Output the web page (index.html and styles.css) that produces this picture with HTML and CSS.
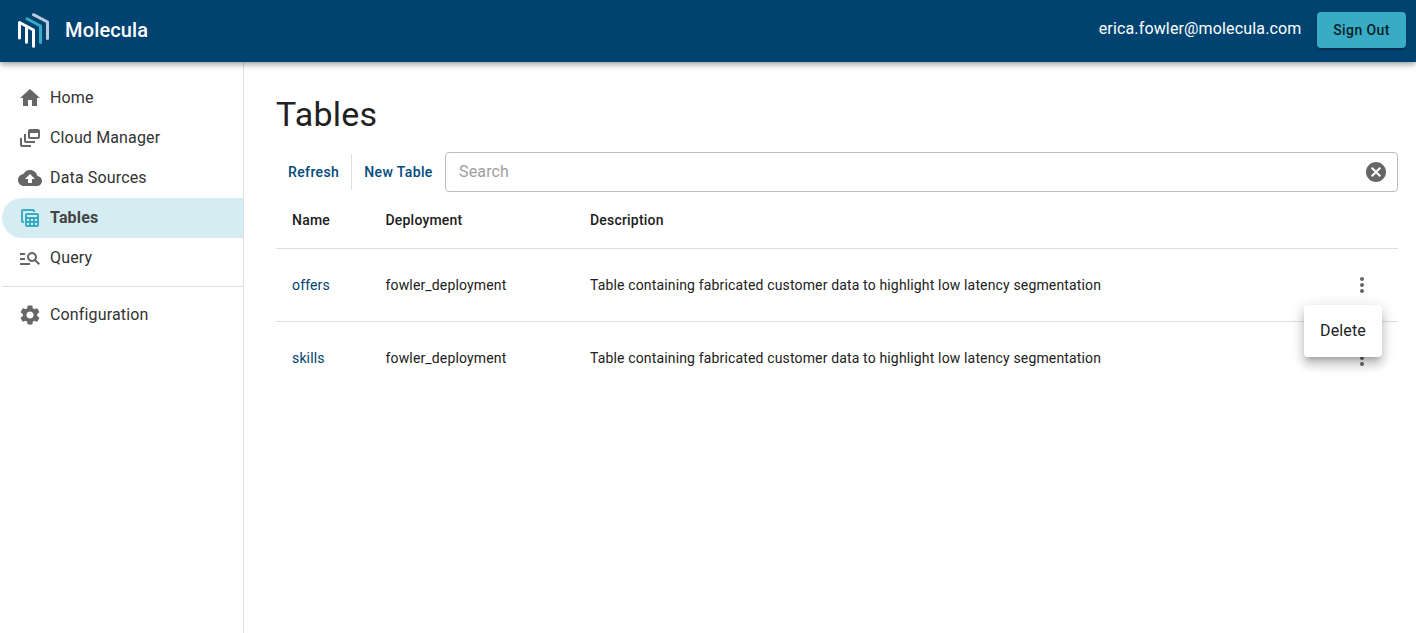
FILE: index.html
```html
<!DOCTYPE html>
<html lang="en">
<head>
<meta charset="utf-8">
<title>Molecula</title>
<link rel="stylesheet" href="styles.css">
</head>
<body>
<header class="topbar">
  <svg class="logo" viewBox="0 0 34 36" fill="none" stroke-width="3" stroke-linecap="round" stroke-linejoin="round">
    <path stroke="#b9cbd9" d="M17.500 2.700 31.500 10V26.500"/>
    <path stroke="#38acc5" d="M11 6.700 24.500 14V30.500"/>
    <path stroke="#fff" d="M3.500 26V10.500L17.500 18V34.300M10.500 14.500V30.300"/>
  </svg>
  <span class="brand">Molecula</span>
  <span class="email">erica.fowler@molecula.com</span>
  <button class="signout">Sign Out</button>
</header>
<div class="layout">
  <nav class="sidebar">
    <a class="item"><svg class="icon" viewBox="0 0 24 24"><path d="M10 20v-6h4v6h5v-8h3L12 3 2 12h3v8z"/></svg>Home</a>
    <a class="item"><svg class="icon" viewBox="0 0 24 24"><path d="M8 8H6v7c0 1.100.9 2 2 2h9v-2H8V8z"/><path d="M20 3h-8c-1.100 0-2 .9-2 2v6c0 1.100.9 2 2 2h8c1.100 0 2-.9 2-2V5c0-1.100-.9-2-2-2zm0 8h-8V7h8v4zM4 12H2v7c0 1.100.9 2 2 2h9v-2H4v-7z"/></svg>Cloud Manager</a>
    <a class="item"><svg class="icon" viewBox="0 0 24 24"><path d="M19.350 10.040C18.670 6.590 15.640 4 12 4 9.110 4 6.600 5.640 5.350 8.040 2.340 8.360 0 10.910 0 14c0 3.310 2.690 6 6 6h13c2.760 0 5-2.240 5-5 0-2.640-2.050-4.780-4.650-4.960zM14 13v4h-4v-4H7l5-5 5 5h-3z"/></svg>Data Sources</a>
    <a class="item active"><svg class="icon" viewBox="0 0 24 24"><path d="M19 7H9c-1.100 0-2 .9-2 2v10c0 1.100.9 2 2 2h10c1.100 0 2-.9 2-2V9c0-1.100-.9-2-2-2zm0 2v2H9V9h10zm-6 6v-2h2v2h-2zm2 2v2h-2v-2h2zm-4-2H9v-2h2v2zm6-2h2v2h-2v-2zm-8 4h2v2H9v-2zm8 2v-2h2v2h-2zM6 17H5c-1.100 0-2-.9-2-2V5c0-1.100.9-2 2-2h10c1.100 0 2 .9 2 2v1h-2V5H5v10h1v2z"/></svg>Tables</a>
    <a class="item"><svg class="icon" viewBox="0 0 24 24"><path d="M7 9H2V7h5v2zm0 3H2v2h5v-2zm13.590 7-3.830-3.830c-.8.52-1.740.83-2.760.83-2.760 0-5-2.240-5-5s2.240-5 5-5 5 2.240 5 5c0 1.020-.31 1.960-.83 2.750L22 17.590 20.590 19zM17 11c0-1.650-1.350-3-3-3s-3 1.350-3 3 1.350 3 3 3 3-1.350 3-3zM2 19h10v-2H2v2z"/></svg>Query</a>
    <hr class="rule">
    <a class="item"><svg class="icon" viewBox="0 0 24 24"><path d="M19.140 12.940c.04-.3.06-.61.06-.94 0-.32-.02-.64-.07-.94l2.030-1.580c.18-.14.23-.41.12-.61l-1.920-3.320c-.12-.22-.37-.29-.59-.22l-2.390.96c-.5-.38-1.030-.7-1.620-.94l-.36-2.540c-.04-.24-.24-.41-.48-.41h-3.840c-.24 0-.43.17-.47.41l-.36 2.540c-.59.24-1.130.57-1.620.94l-2.390-.96c-.22-.08-.47 0-.59.22L2.740 8.870c-.12.21-.08.47.12.61l2.030 1.580c-.05.3-.09.63-.09.94s.02.64.07.94l-2.030 1.580c-.18.14-.23.41-.12.61l1.920 3.320c.12.22.37.29.59.22l2.390-.96c.5.38 1.030.7 1.620.94l.36 2.540c.05.24.24.41.48.41h3.840c.24 0 .44-.17.47-.41l.36-2.540c.59-.24 1.130-.56 1.620-.94l2.390.96c.22.08.47 0 .59-.22l1.920-3.320c.12-.22.07-.47-.12-.61l-2.010-1.580zM12 15.600c-1.980 0-3.600-1.620-3.600-3.600s1.620-3.600 3.600-3.600 3.600 1.620 3.600 3.600-1.620 3.600-3.600 3.600z"/></svg>Configuration</a>
  </nav>
  <main class="content">
    <h1 class="title">Tables</h1>
    <div class="toolbar">
      <button class="action first">Refresh</button>
      <button class="action second">New Table</button>
      <div class="search"><input class="field" placeholder="Search"><svg class="icon" viewBox="0 0 24 24"><path d="M12 2C6.470 2 2 6.470 2 12s4.470 10 10 10 10-4.470 10-10S17.530 2 12 2zm5 13.590L15.590 17 12 13.410 8.410 17 7 15.590 10.590 12 7 8.410 8.410 7 12 10.590 15.590 7 17 8.410 13.410 12 17 15.590z"/></svg></div>
    </div>
    <div class="table">
      <div class="row head"><span>Name</span><span>Deployment</span><span>Description</span></div>
      <div class="row"><a class="link">offers</a><span>fowler_deployment</span><span>Table containing fabricated customer data to highlight low latency segmentation</span>
        <div class="more"><svg class="dots" viewBox="0 0 24 24"><path d="M12 8c1.100 0 2-.9 2-2s-.9-2-2-2-2 .9-2 2 .9 2 2 2zm0 2c-1.100 0-2 .9-2 2s.9 2 2 2 2-.9 2-2-.9-2-2-2zm0 6c-1.100 0-2 .9-2 2s.9 2 2 2 2-.9 2-2-.9-2-2-2z"/></svg><div class="menu">Delete</div></div></div>
      <div class="row last"><a class="link">skills</a><span>fowler_deployment</span><span>Table containing fabricated customer data to highlight low latency segmentation</span>
        <div class="more"><svg class="dots" viewBox="0 0 24 24"><path d="M12 8c1.100 0 2-.9 2-2s-.9-2-2-2-2 .9-2 2 .9 2 2 2zm0 2c-1.100 0-2 .9-2 2s.9 2 2 2 2-.9 2-2-.9-2-2-2zm0 6c-1.100 0-2 .9-2 2s.9 2 2 2 2-.9 2-2-.9-2-2-2z"/></svg></div></div>
    </div>
  </main>
</div>
</body>
</html>
```
FILE: styles.css
```css
* { box-sizing: border-box; }
body {
  margin: 0;
  height: 100vh;
  display: flex;
  flex-direction: column;
  overflow: hidden;
  font: 16px/24px Roboto, sans-serif;
  letter-spacing: 0.15px;
  color: #212121;
  background: #fff;
}
button { font-family: inherit; border: 0; background: none; white-space: nowrap; }
.topbar {
  position: relative;
  z-index: 1;
  flex: none;
  height: 62px;
  display: flex;
  align-items: center;
  padding: 0 10px 2px 16px;
  color: #fff;
  background: #004371;
  box-shadow: 0 2px 4px -1px rgba(0,0,0,.2), 0 4px 5px rgba(0,0,0,.14), 0 1px 10px rgba(0,0,0,.12);
}
.logo { width: 34px; height: 36px; }
.brand { margin-left: 15px; font-size: 20px; font-weight: 500; letter-spacing: 0.15px; }
.email { margin: 0 15.5px 3px auto; }
.signout {
  width: 89px;
  height: 36px;
  padding: 0;
  font-size: 14px;
  font-weight: 500;
  letter-spacing: 0.4px;
  color: #0b1d26;
  background: #38acc5;
  border-radius: 4px;
  box-shadow: 0 3px 1px -2px rgba(0,0,0,.2), 0 2px 2px rgba(0,0,0,.14), 0 1px 5px rgba(0,0,0,.12);
}
.layout { flex: 1; display: flex; }
.sidebar { width: 244px; padding: 16px 0 0 2px; border-right: 1px solid #dedede; }
.item { height: 40px; display: flex; align-items: center; gap: 8px; padding-left: 16px; color: #333; }
.icon { flex: none; width: 24px; height: 24px; fill: #666; }
.active { background: #d5edf2; border-radius: 20px 0 0 20px; font-weight: 700; color: #444; }
.active .icon { fill: #38acc5; }
.rule { margin: 8px 0; border: 0; border-top: 1px solid #dedede; }
.content { flex: 1; padding: 31px 18px 0 32px; }
.title { margin: 0; font-size: 34px; line-height: 42px; font-weight: 400; letter-spacing: 0.25px; }
.toolbar { display: flex; align-items: center; height: 40px; margin-top: 17px; }
.action { height: 36px; padding: 0 12px; font-size: 14px; font-weight: 500; letter-spacing: 0.38px; color: #004a7c; }
.first { width: 76px; border-right: 1px solid #dedede; }
.second { width: 93px; }
.search { flex: 1; height: 40px; display: flex; align-items: center; padding: 0 9px 0 13px; border: 1px solid #bdbdbd; border-radius: 4px; }
.field { flex: 1; padding: 0; border: 0; outline: 0; font: inherit; letter-spacing: inherit; }
.field::placeholder { color: #9e9e9e; }
.table { font-size: 14px; letter-spacing: 0.15px; }
.row {
  display: grid;
  grid-template-columns: 93.5px 204.5px 1fr 24px;
  align-items: center;
  height: 73px;
  padding: 0 24px 0 16px;
  border-bottom: 1px solid #dedede;
}
.head { height: 57px; font-weight: 500; letter-spacing: 0.2px; }
.last { height: 72px; border-bottom: 0; }
.link { color: #004371; }
.more { position: relative; height: 24px; }
.dots { width: 24px; height: 24px; fill: #666; }
.menu {
  position: absolute;
  z-index: 2;
  top: 32px;
  right: -8px;
  width: 78px;
  height: 52px;
  padding: 14px 16px;
  font-size: 16px;
  letter-spacing: 0.15px;
  background: #fff;
  border-radius: 4px;
  box-shadow: 0 5px 5px -3px rgba(0,0,0,.2), 0 8px 10px 1px rgba(0,0,0,.14), 0 3px 14px 2px rgba(0,0,0,.12);
}
```
